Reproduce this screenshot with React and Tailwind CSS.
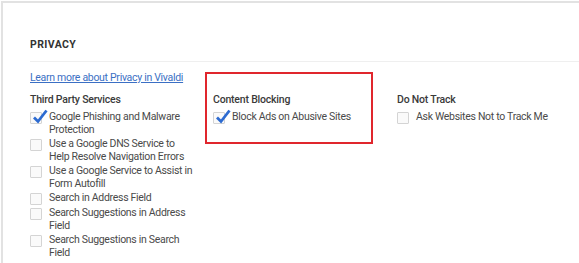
import React from "react";

const font = { fontFamily: 'Roboto, "Noto Sans", sans-serif' };

function Check() {
  return (
    <svg
      className="absolute left-[1px] top-[-4px]"
      width="16"
      height="15"
      viewBox="0 0 16 15"
    >
      <path
        d="M2 8.5 L6 12.5 L14.5 1.5"
        fill="none"
        stroke="#2d6bd1"
        strokeWidth="2.8"
        strokeLinejoin="miter"
        strokeLinecap="butt"
      />
    </svg>
  );
}

function Item({ checked, children }) {
  return (
    <div className="flex items-start">
      <div className="relative w-[12px] h-[12px] shrink-0 mt-[1px] border border-[#d4d4d4] bg-[#fafafa] rounded-[1px]">
        {checked && <Check />}
      </div>
      <div className="ml-[7px] text-[10.5px] leading-[12.5px] tracking-[-0.3px] text-[#4a4a4a]">
        {children}
      </div>
    </div>
  );
}

function Heading({ children }) {
  return (
    <div className="text-[10.5px] leading-[14px] tracking-[-0.2px] font-medium text-[#3a3a3a] mb-[4px]">
      {children}
    </div>
  );
}

export default function App() {
  return (
    <div className="w-[579px] h-[263px] bg-white relative overflow-hidden" style={font}>
      <div className="absolute left-[1px] top-[1px] right-0 bottom-0 border-t-2 border-l-2 border-[#e2e2e2]">
        <div className="pl-[27px] pt-[35px]">
          <div className="text-[10.5px] leading-[14px] font-bold tracking-[0.4px] text-[#333]">
            PRIVACY
          </div>
          <div className="mt-[9px] h-px bg-[#efefef]" />
          <div className="mt-[9px] text-[10.5px] leading-[14px] tracking-[-0.3px]">
            <a className="text-[#3b6fc4] underline" href="#">
              Learn more about Privacy in Vivaldi
            </a>
          </div>
          <div className="mt-[8px] grid grid-cols-[183px_184px_1fr]">
            <div className="flex flex-col">
              <Heading>Third Party Services</Heading>
              <div className="flex flex-col gap-[2px] w-[167px]">
                <Item checked>Google Phishing and Malware Protection</Item>
                <Item>Use a Google DNS Service to Help Resolve Navigation Errors</Item>
                <Item>Use a Google Service to Assist in Form Autofill</Item>
                <Item>Search in Address Field</Item>
                <Item>Search Suggestions in Address Field</Item>
                <Item>Search Suggestions in Search Field</Item>
              </div>
            </div>
            <div className="flex flex-col">
              <Heading>Content Blocking</Heading>
              <Item checked>Block Ads on Abusive Sites</Item>
            </div>
            <div className="flex flex-col">
              <Heading>Do Not Track</Heading>
              <Item>Ask Websites Not to Track Me</Item>
            </div>
          </div>
        </div>
      </div>
      <div className="absolute left-[205px] top-[72px] w-[168px] h-[72px] border-2 border-[#e0262d]" />
    </div>
  );
}
